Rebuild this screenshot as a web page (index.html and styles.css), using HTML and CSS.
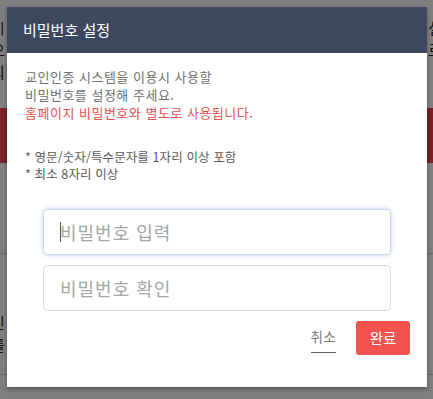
FILE: index.html
```html
<!DOCTYPE html>
<html lang="ko">
<head>
<meta charset="utf-8">
<title>비밀번호 설정</title>
<link rel="stylesheet" href="styles.css">
</head>
<body>
<div class="page">
  <div class="page-lines">
    <div class="pl pl1"><span>시</span><span>설</span></div>
    <div class="pl pl2"><span>으</span><span>로</span></div>
    <div class="pl pl3"><span>되</span><span></span></div>
  </div>
  <div class="page-bar"></div>
  <div class="page-sec">
    <div class="pl pl4"><span>인</span></div>
    <div class="pl pl5"><span>를</span></div>
  </div>
  <div class="page-foot"></div>
</div>
<div class="overlay"></div>
<div class="modal">
  <div class="modal-head">비밀번호 설정</div>
  <div class="modal-body">
    <p class="desc">교인인증 시스템을 이용시 사용할<br>비밀번호를 설정해 주세요.<br><span class="warn">홈페이지 비밀번호와 별도로 사용됩니다.</span></p>
    <p class="rules">* 영문/숫자/특수문자를 1자리 이상 포함<br>* 최소 8자리 이상</p>
    <div class="fields">
      <div class="field-wrap">
        <input class="field field-focus" type="password" placeholder="비밀번호 입력">
        <span class="caret"></span>
      </div>
      <div class="field-wrap">
        <input class="field" type="password" placeholder="비밀번호 확인">
      </div>
    </div>
    <div class="actions">
      <a class="btn-cancel">취소</a>
      <a class="btn-ok">완료</a>
    </div>
  </div>
</div>
</body>
</html>
```
FILE: styles.css
```css
* { box-sizing: border-box; }
html, body { margin: 0; padding: 0; }
body {
  width: 433px;
  height: 399px;
  overflow: hidden;
  background: #fff;
  font-family: "Noto Sans CJK KR", "Noto Sans", sans-serif;
  position: relative;
}
.page { width: 433px; height: 399px; }
.page-lines { padding-top: 17px; }
.pl {
  display: flex;
  justify-content: space-between;
  font-size: 15px;
  line-height: 22px;
  color: #222;
  margin: 0 -9px;
}
.page-bar {
  margin-top: 25px;
  height: 55px;
  background: #f3424f;
}
.page-sec {
  margin-top: 90px;
  border-top: 1px solid #d6d6d6;
  padding-top: 58px;
}
.page-foot {
  margin-top: 18px;
  border-top: 1px solid #d6d6d6;
}
.overlay {
  position: absolute;
  inset: 0;
  background: rgba(0, 0, 0, 0.5);
}
.modal {
  position: absolute;
  left: 7px;
  top: 7px;
  width: 420px;
  height: 380px;
  background: #fff;
  box-shadow: 0 2px 4px rgba(0,0,0,0.35);
}
.modal-head {
  height: 46px;
  background: #3d4860;
  color: #fff;
  font-size: 15px;
  line-height: 46px;
  padding-left: 16px;
}
.modal-body { padding: 15px 17px 0 18px; }
.desc {
  margin: 0;
  font-size: 13px;
  line-height: 18px;
  letter-spacing: 0.5px;
  color: #707070;
}
.warn { color: #e3514f; }
.rules {
  margin: 26px 0 0;
  font-size: 12.5px;
  line-height: 17px;
  letter-spacing: 0.1px;
  color: #5a5a5a;
}
.fields {
  margin: 27px 19px 0 18px;
  display: flex;
  flex-direction: column;
  gap: 10px;
}
.field-wrap { position: relative; }
.field {
  display: block;
  width: 100%;
  height: 46px;
  border: 1px solid #dcdcdc;
  border-radius: 5px;
  padding: 0 16px;
  font-family: "Noto Sans CJK KR", sans-serif;
  font-size: 18px;
  letter-spacing: 1px;
  color: #333;
  outline: none;
  background: #fff;
}
.field::placeholder { color: #a6a6a6; }
.field-focus {
  border-color: #c9d8ea;
  box-shadow: 0 0 5px rgba(110, 160, 225, 0.45);
}
.caret {
  position: absolute;
  left: 17px;
  top: 13px;
  width: 1px;
  height: 20px;
  background: #555;
}
.actions {
  margin-top: 10px;
  display: flex;
  justify-content: flex-end;
  align-items: center;
  gap: 20px;
}
.btn-cancel {
  font-size: 13.5px;
  letter-spacing: 0.3px;
  color: #777;
  line-height: 18px;
  padding-bottom: 7px;
  border-bottom: 1px solid #666;
  margin-top: 4px;
}
.btn-ok {
  width: 54px;
  height: 34px;
  background: #f5534f;
  color: #fff;
  border-radius: 3px;
  font-size: 14.5px;
  line-height: 34px;
  text-align: center;
}
```
